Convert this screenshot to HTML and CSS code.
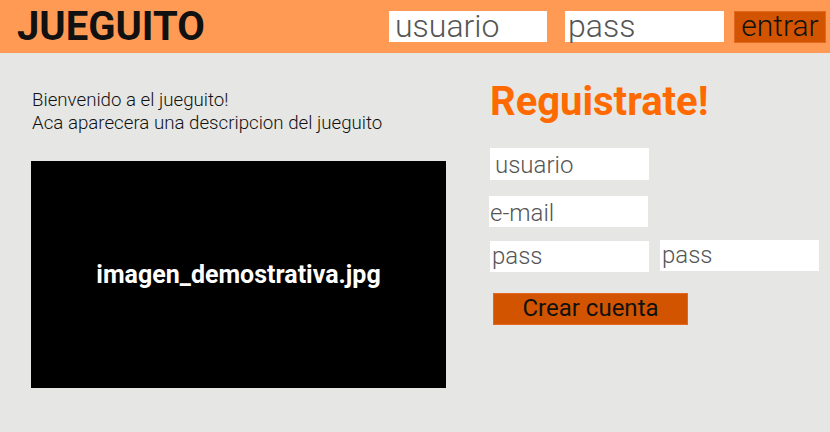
FILE: index.html
```html
<!DOCTYPE html>
<html lang="es">
<head>
<meta charset="utf-8">
<title>Jueguito</title>
<link rel="stylesheet" href="styles.css">
</head>
<body>
<header class="topbar">
  <h1 class="brand">JUEGUITO</h1>
  <form class="login">
    <div class="field field-lg">usuario</div>
    <div class="field field-lg field-pass">pass</div>
    <div class="btn btn-entrar">entrar</div>
  </form>
</header>
<main class="content">
  <section class="intro">
    <p class="desc">Bienvenido a el jueguito!<br>Aca aparecera una descripcion del jueguito</p>
    <div class="demo">imagen_demostrativa.jpg</div>
  </section>
  <section class="register">
    <h2 class="reg-title">Reguistrate!</h2>
    <div class="field field-sm f-user">usuario</div>
    <div class="field field-sm f-mail">e-mail</div>
    <div class="pass-row">
      <div class="field field-sm f-pass1">pass</div>
      <div class="field field-sm f-pass2">pass</div>
    </div>
    <div class="btn btn-crear">Crear cuenta</div>
  </section>
</main>
</body>
</html>
```
FILE: styles.css
```css
* { box-sizing: border-box; }
html, body { margin: 0; padding: 0; }
body {
  width: 830px;
  height: 432px;
  background: #e6e6e4;
  font-family: Roboto, "Liberation Sans", sans-serif;
  overflow: hidden;
}
.topbar {
  height: 53px;
  background: #ff9a55;
  display: flex;
  align-items: center;
  padding: 0 4px 0 17px;
}
.brand {
  margin: 0;
  font-size: 40px;
  font-weight: 700;
  color: #111;
  line-height: 53px;
  letter-spacing: 0;
}
.login {
  margin: 0 0 0 auto;
  display: flex;
  align-items: center;
}
.field {
  background: #fff;
  color: #555;
  font-weight: 300;
  white-space: nowrap;
}
.field-lg {
  width: 158px;
  height: 31px;
  font-size: 32px;
  line-height: 31px;
  padding-left: 6px;
}
.field-pass { margin-left: 18px; width: 159px; padding-left: 3px; }
.btn {
  background: #d35400;
  border: 1px solid #e2691f;
  color: #111;
  text-align: center;
  white-space: nowrap;
}
.btn-entrar {
  margin-left: 10px;
  width: 92px;
  height: 32px;
  font-size: 30px;
  line-height: 28px;
  font-weight: 300;
}
.content {
  display: flex;
  padding-left: 31px;
}
.intro { width: 415px; }
.desc {
  margin: 36px 0 0 1px;
  font-size: 18.7px;
  line-height: 23px;
  font-weight: 300;
  color: #111;
}
.demo {
  margin-top: 26px;
  height: 227px;
  background: #000;
  color: #fff;
  font-weight: 700;
  font-size: 25px;
  display: flex;
  align-items: center;
  justify-content: center;
}
.register {
  margin-left: 44px;
  display: flex;
  flex-direction: column;
  align-items: flex-start;
}
.reg-title {
  margin: 25px 0 0 0;
  font-size: 40px;
  line-height: 48px;
  font-weight: 700;
  color: #ff6a00;
}
.field-sm {
  width: 159px;
  font-size: 24px;
  padding-left: 5px;
}
.f-user { margin-top: 22px; height: 32px; line-height: 35px; }
.f-mail { margin-top: 16px; margin-left: -1px; height: 31px; line-height: 34px; padding-left: 1px; }
.pass-row {
  margin-top: 13px;
  display: flex;
  align-items: flex-start;
  gap: 11px;
}
.f-pass1 { margin-top: 1px; height: 31px; line-height: 31px; padding-left: 2px; }
.f-pass2 { height: 31px; line-height: 31px; padding-left: 2px; }
.btn-crear {
  margin-top: 21px;
  margin-left: 3px;
  width: 195px;
  height: 32px;
  font-size: 24px;
  line-height: 28px;
}
```
